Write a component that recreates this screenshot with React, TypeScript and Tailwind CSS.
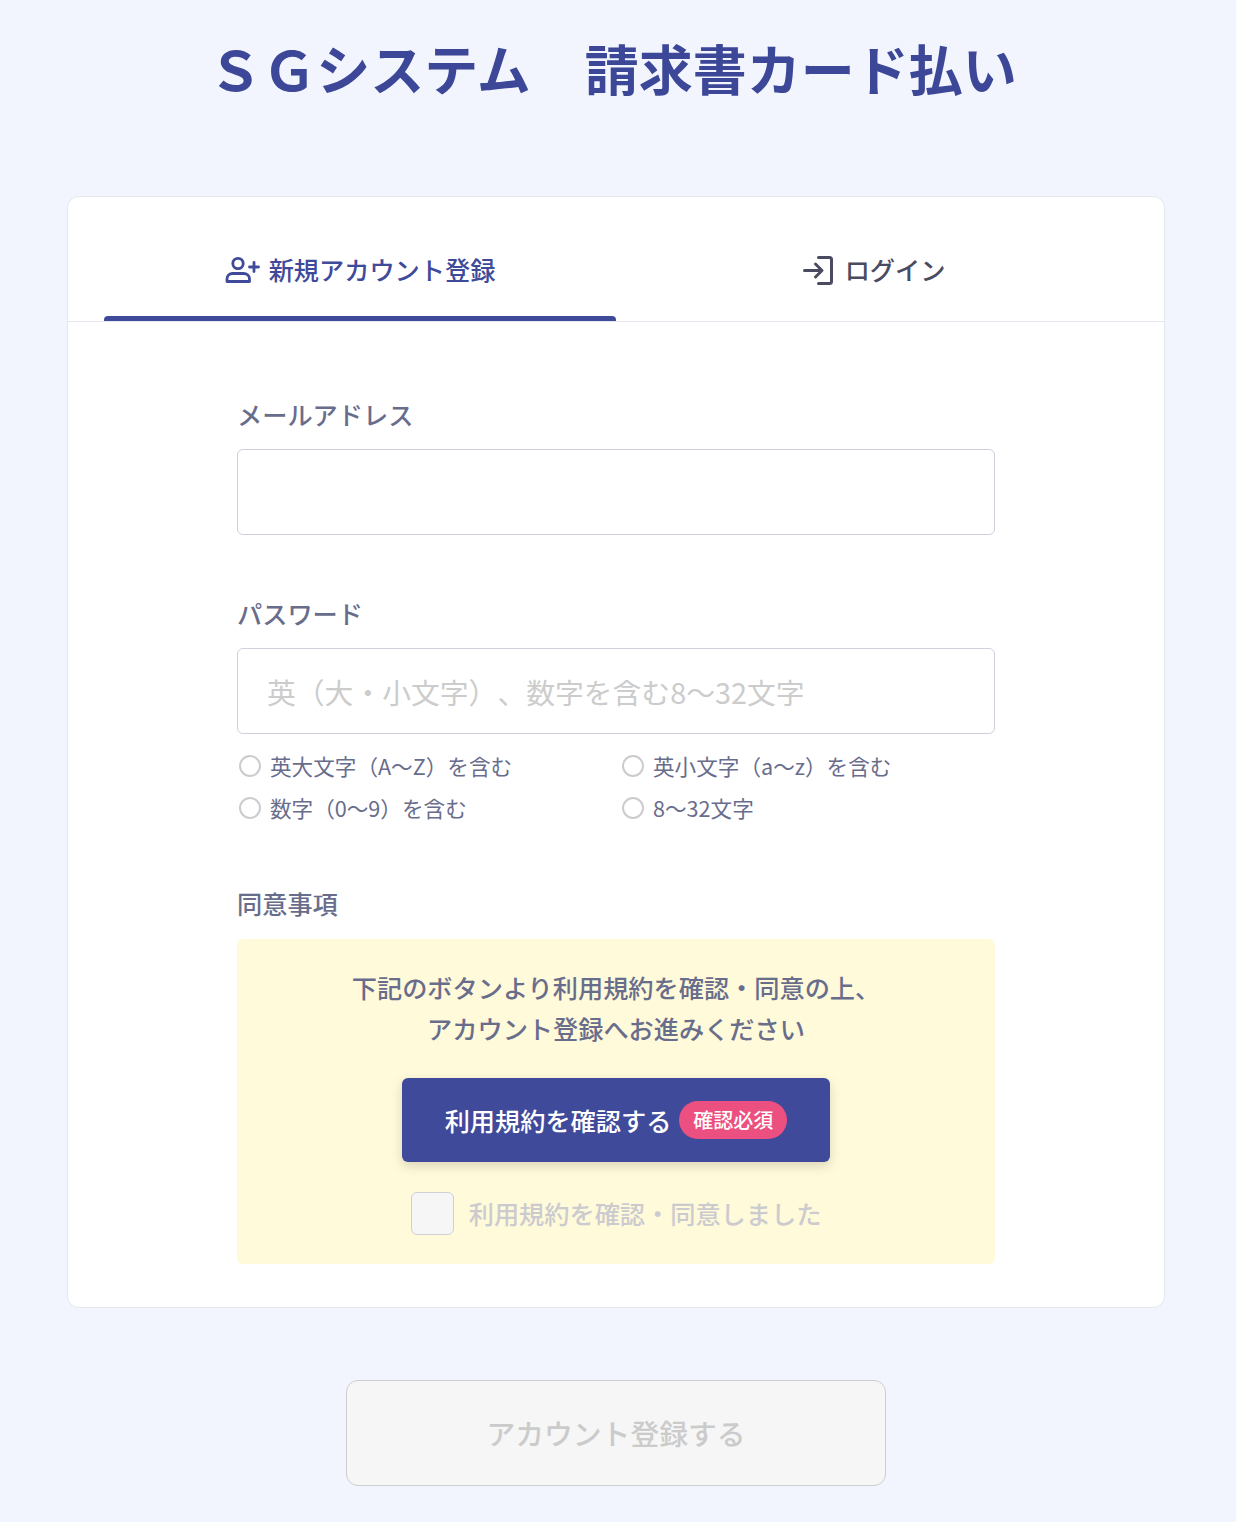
import React from "react";

const font = { fontFamily: '"Noto Sans CJK JP", "Noto Sans", sans-serif' };

const rules = [
  "英大文字（A〜Z）を含む",
  "英小文字（a〜z）を含む",
  "数字（0〜9）を含む",
  "8〜32文字",
];

function UserPlus() {
  return (
    <svg width="36" height="28" viewBox="0 0 36 28" fill="none" stroke="currentColor" strokeWidth="2.8" strokeLinecap="round" strokeLinejoin="round">
      <circle cx="13" cy="7.500" r="5.200" />
      <path d="M2 25.500v-2.500c0-3.500 2.500-5.500 5.500-5.500h11c3 0 6 2 6 5.500v2.500z" />
      <path d="M29 6.500v9M24.500 11h9" />
    </svg>
  );
}

function LoginIcon() {
  return (
    <svg width="32" height="30" viewBox="0 0 32 30" fill="none" stroke="currentColor" strokeWidth="3" strokeLinecap="round" strokeLinejoin="round">
      <path d="M16.500 2.500h11a2 2 0 0 1 2 2v22a2 2 0 0 1-2 2h-11" />
      <path d="M2.500 15.500H19M13.500 9l6.500 6.500-6.500 6.500" />
    </svg>
  );
}

export default function App() {
  return (
    <div className="min-h-screen w-full bg-[#f2f5fe] pt-[34px] pb-[36px] pr-[4px]" style={font}>
      <h1 className="pr-[7px] text-center text-[54px] leading-[68px] font-bold text-[#3c4797] blur-[0.6px]">ＳＧシステム　請求書カード払い</h1>

      <div className="mx-[67px] mt-[94px] rounded-[12px] border border-[#e5e7ee] bg-white pb-[43px]">
        {/* Tabs */}
        <div className="flex border-b border-[#e5e7ee] px-[36px]">
          <div className="relative flex h-[124px] w-[512px] items-center justify-center gap-[8px] pt-[22px] text-[25.2px] font-medium text-[#3f4a9a]">
            <UserPlus />
            <span>新規アカウント登録</span>
            <span className="absolute right-0 bottom-0 left-0 h-[5px] rounded-t-[4px] bg-[#3f4a9a]" />
          </div>
          <div className="flex h-[124px] flex-1 items-center justify-center gap-[11px] pt-[22px] pl-[3px] text-[25.2px] font-medium text-[#4a4b60]">
            <LoginIcon />
            <span>ログイン</span>
          </div>
        </div>

        {/* Form */}
        <div className="mx-auto w-[758px] pt-[73px]">
          <div className="text-[25.2px] leading-[38px] font-medium text-[#696d8c]">メールアドレス</div>
          <input type="text" className="mt-[16px] block h-[86px] w-full rounded-[6px] border border-[#cfd0de] bg-white" />

          <div className="mt-[59px] text-[25.2px] leading-[38px] font-medium text-[#696d8c]">パスワード</div>
          <input
            type="text"
            placeholder="英（大・小文字）、数字を含む8〜32文字"
            className="mt-[16px] block h-[86px] w-full rounded-[6px] border border-[#cfd0de] bg-white px-[29px] text-[28.8px] [text-spacing-trim:space-all] placeholder:text-[#cccccc]"
          />
          <div className="mt-[16px] grid grid-cols-[383px_1fr] gap-y-[10px]">
            {rules.map((r) => (
              <div key={r} className="flex h-[32px] items-center gap-[9px] text-[21.6px] text-[#696d8c]">
                <span className="ml-[2px] h-[22px] w-[22px] rounded-full border-2 border-[#cccccf]" />
                <span>{r}</span>
              </div>
            ))}
          </div>

          <div className="mt-[60px] text-[25.2px] leading-[38px] font-medium text-[#696d8c]">同意事項</div>
          <div className="mt-[17px] rounded-[6px] bg-[#fffad9] pt-[28px] pb-[29px]">
            <p className="text-center text-[25.2px] leading-[41px] font-medium text-[#696d8c]">
              下記のボタンより利用規約を確認・同意の上、
              <br />
              アカウント登録へお進みください
            </p>
            <div className="mt-[29px] flex justify-center">
              <button className="flex h-[84px] w-[428px] items-center justify-center gap-[8px] rounded-[6px] bg-[#3f4a9a] text-[25.2px] font-medium text-white shadow-[0_4px_12px_rgba(0,0,0,0.15)]">
                <span className="pt-[1px]">利用規約を確認する</span>
                <span className="flex h-[38px] items-center rounded-full bg-[#ec5080] px-[14px] text-[20px] font-medium">確認必須</span>
              </button>
            </div>
            <div className="mt-[30px] flex items-center justify-center gap-[15px]">
              <span className="h-[43px] w-[43px] rounded-[6px] border border-[#cfd0d6] bg-[#f6f6f6]" />
              <span className="text-[25.2px] font-medium text-[#cbcbcf]">利用規約を確認・同意しました</span>
            </div>
          </div>
        </div>
      </div>

      <div className="mt-[72px] flex justify-center">
        <button className="h-[106px] w-[540px] rounded-[12px] border border-[#cdcdcd] bg-[#f6f6f6] text-[28.8px] font-medium text-[#cbcbcb]">アカウント登録する</button>
      </div>
    </div>
  );
}
